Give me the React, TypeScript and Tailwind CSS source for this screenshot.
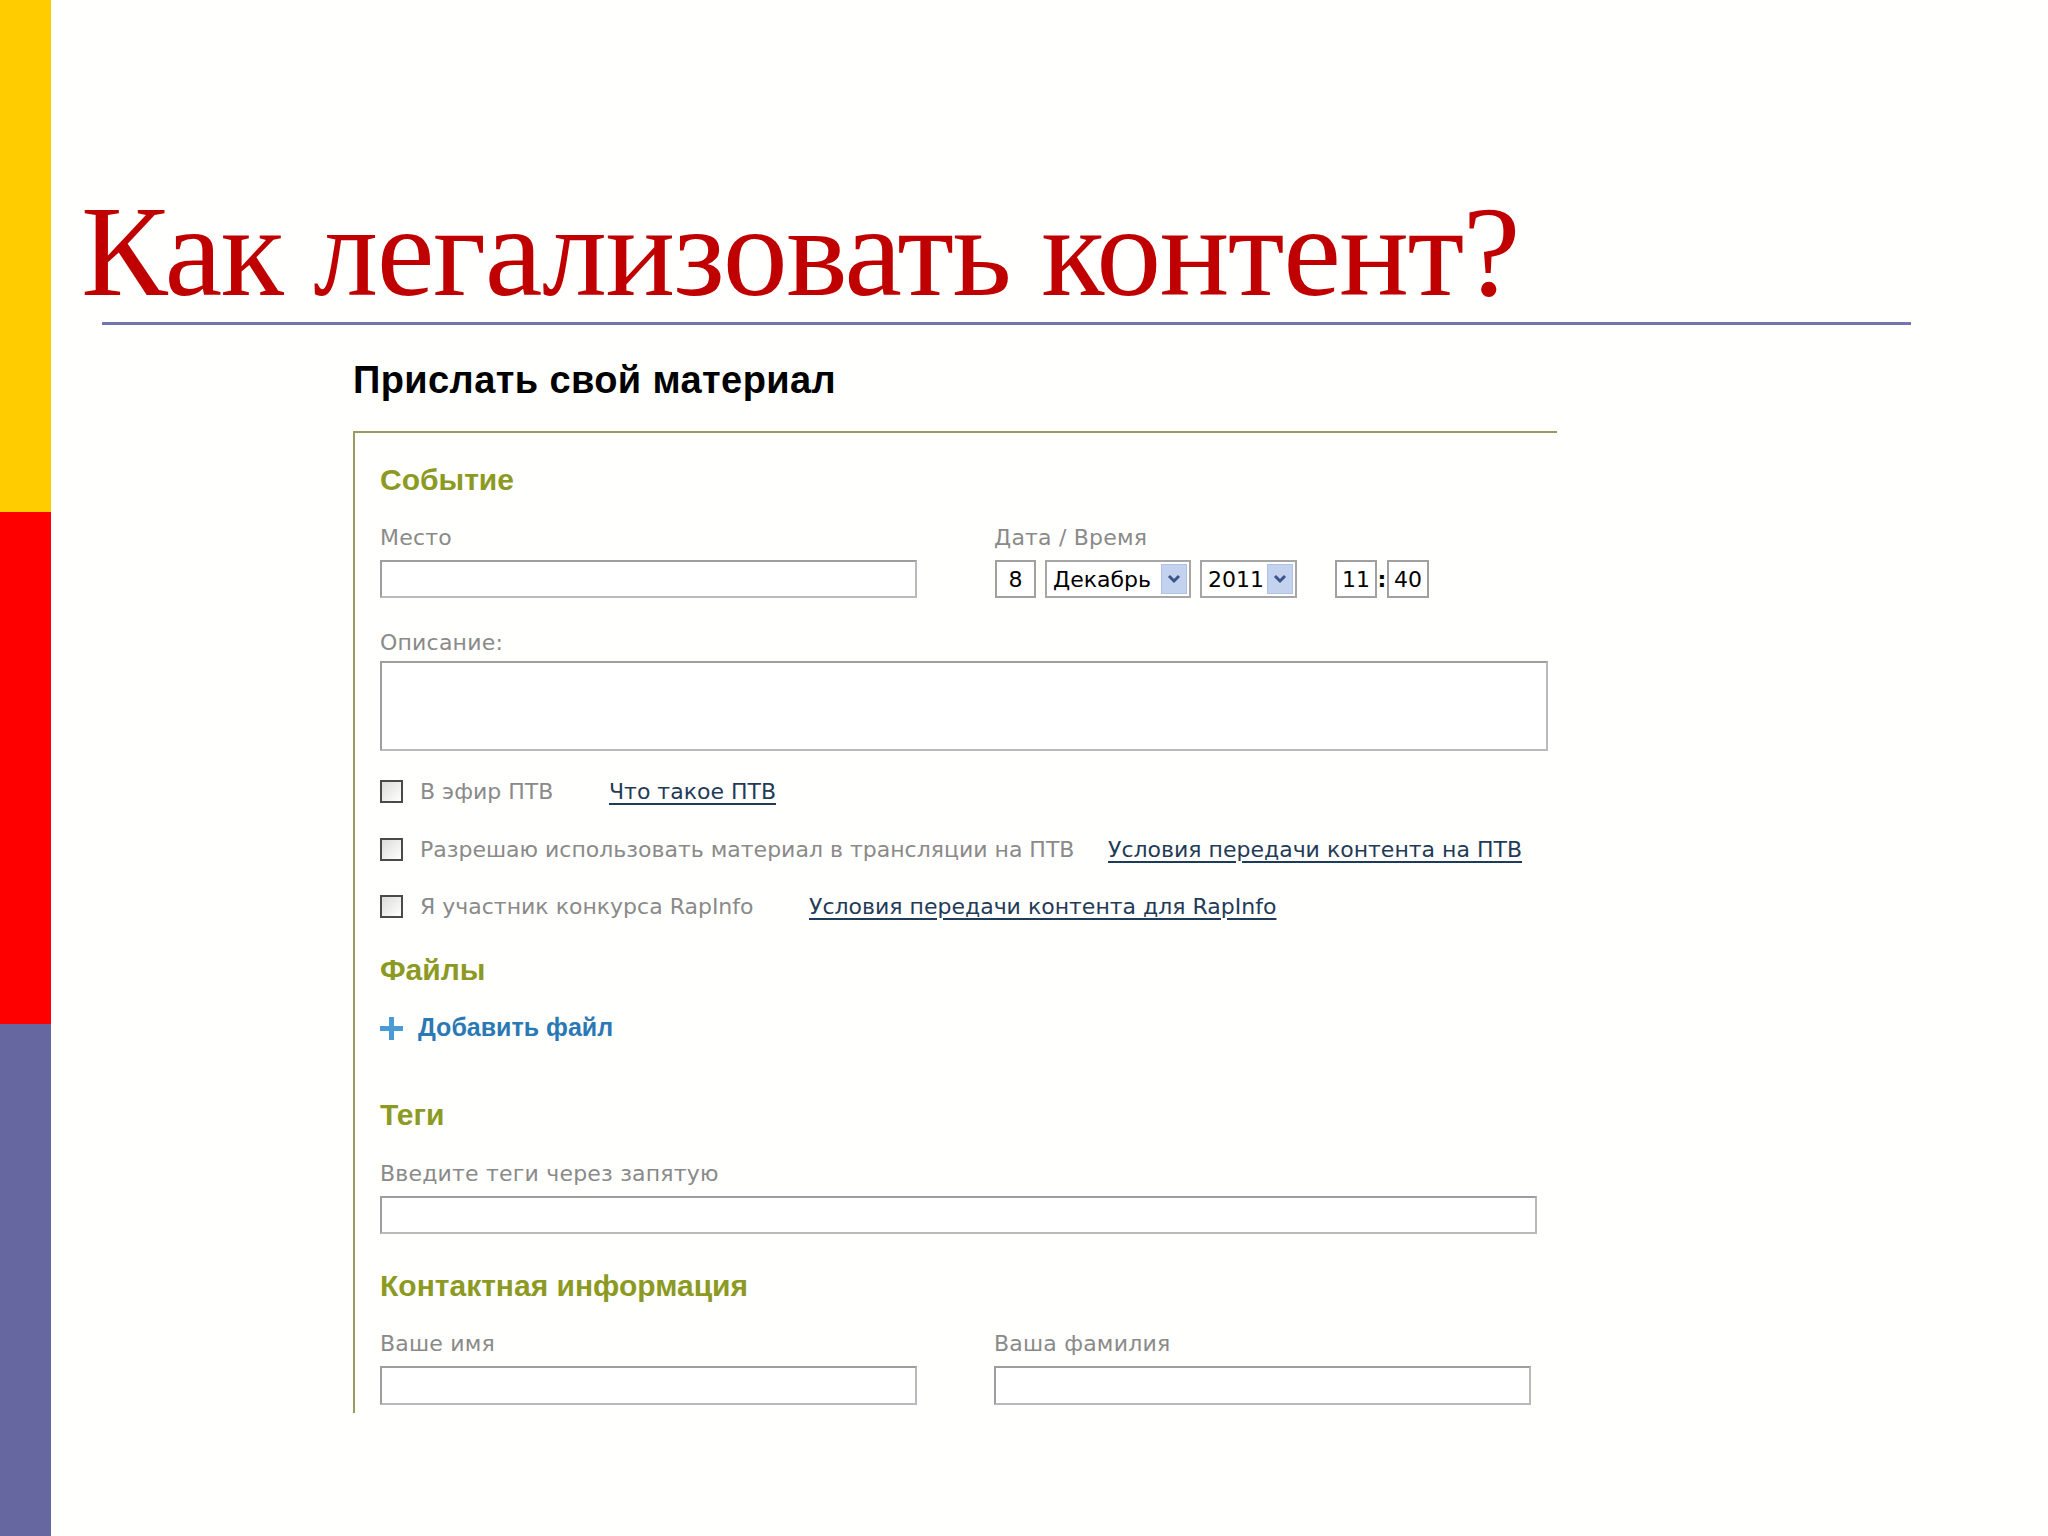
import React from "react";

const label = "text-[22px] leading-[30px] h-[30px] text-[#8a8a8a] tracking-[0.2px]";
const labelFont = { fontFamily: '"DejaVu Sans", Verdana, sans-serif' };

function Input({ w, h = 38 }: { w: string; h?: number }) {
  return (
    <div
      className={`${w} border-2 border-[#9c9ea0] border-b-[#b8babc] border-r-[#b8babc] bg-white`}
      style={{ height: h }}
    />
  );
}

function Heading({ children }: { children: React.ReactNode }) {
  return (
    <div
      className="h-[38px] flex items-center text-[30px] font-bold text-[#8c9a24]"
      style={{ fontFamily: '"Liberation Sans", Arial, sans-serif' }}
    >
      {children}
    </div>
  );
}

function Checkbox() {
  return (
    <div className="w-[23px] h-[23px] border-2 border-[#4a4a4a] bg-gradient-to-br from-[#dcdcd8] to-[#ffffff] shrink-0" />
  );
}

function Link({ children }: { children: React.ReactNode }) {
  return <span className="text-[#1f3b58] underline underline-offset-[4px] decoration-[2px]">{children}</span>;
}

function Chevron() {
  return (
    <div className="w-[26px] h-[30px] bg-[#c3d3ef] border border-[#b0c2e6] flex items-center justify-center">
      <svg width="14" height="10" viewBox="0 0 14 10">
        <path d="M2 2 L7 7 L12 2" stroke="#3c5488" strokeWidth="3" fill="none" />
      </svg>
    </div>
  );
}

export default function App() {
  return (
    <div className="w-[2048px] h-[1536px] bg-[#fffffd] flex overflow-hidden">
      <div className="w-[51px] flex flex-col shrink-0">
        <div className="h-[512px] bg-[#ffcc00]" />
        <div className="h-[512px] bg-[#ff0000]" />
        <div className="h-[512px] bg-[#6666a0]" />
      </div>
      <div className="flex-1 flex flex-col">
        <div
          className="mt-[186px] ml-[30px] text-[130px] leading-none text-[#c00000] tracking-[-1.5px] whitespace-nowrap"
          style={{ fontFamily: '"Liberation Serif", "Times New Roman", serif' }}
        >
          Как легализовать контент?
        </div>
        <div className="mt-[6px] ml-[51px] w-[1809px] h-[3px] bg-[#7474b0]" />
        <div
          className="mt-[36px] ml-[302px] h-[38px] flex items-center text-[38px] font-bold text-black tracking-[0.4px]"
          style={{ fontFamily: '"Liberation Sans", Arial, sans-serif' }}
        >
          Прислать свой материал
        </div>
        <div
          className="mt-[32px] ml-[302px] w-[1204px] border-t-2 border-l-2 border-[#9a9a62] pl-[25px] pb-[8px] flex flex-col"
          style={labelFont}
        >
          <div className="mt-[27px]">
            <Heading>Событие</Heading>
          </div>
          <div className="mt-[25px] flex">
            <div className={`${label} w-[614px]`}>Место</div>
            <div className={label}>Дата / Время</div>
          </div>
          <div className="mt-[7px] flex items-center">
            <Input w="w-[537px]" />
            <div className="ml-[78px] flex items-center text-[22px] text-black">
              <div className="w-[41px] h-[38px] border-2 border-[#a0a0a0] bg-white flex items-center justify-center">
                8
              </div>
              <div className="ml-[9px] w-[146px] h-[38px] border-2 border-[#a6a6a6] bg-white flex items-center justify-between pl-[6px] pr-[2px]">
                <span>Декабрь</span>
                <Chevron />
              </div>
              <div className="ml-[9px] w-[97px] h-[38px] border-2 border-[#a6a6a6] bg-white flex items-center justify-between pl-[6px] pr-[2px]">
                <span>2011</span>
                <Chevron />
              </div>
              <div className="ml-[38px] w-[42px] h-[38px] border-2 border-[#a0a0a0] bg-white flex items-center justify-center">
                11
              </div>
              <div className="w-[10px] text-center font-bold">:</div>
              <div className="w-[42px] h-[38px] border-2 border-[#a0a0a0] bg-white flex items-center justify-center">
                40
              </div>
            </div>
          </div>
          <div className={`mt-[30px] ${label}`}>Описание:</div>
          <div className="mt-[3px]">
            <Input w="w-[1168px]" h={90} />
          </div>
          <div className="mt-[25px] h-[30px] flex items-center text-[22px] text-[#8a8a8a] tracking-[0px]">
            <Checkbox />
            <span className="ml-[17px] w-[189px]">В эфир ПТВ</span>
            <Link>Что такое ПТВ</Link>
          </div>
          <div className="mt-[28px] h-[30px] flex items-center text-[22px] text-[#8a8a8a] tracking-[0px]">
            <Checkbox />
            <span className="ml-[17px] w-[688px] whitespace-nowrap">Разрешаю использовать материал в трансляции на ПТВ</span>
            <Link>Условия передачи контента на ПТВ</Link>
          </div>
          <div className="mt-[27px] h-[30px] flex items-center text-[22px] text-[#8a8a8a] tracking-[0px]">
            <Checkbox />
            <span className="ml-[17px] w-[389px] whitespace-nowrap">Я участник конкурса RapInfo</span>
            <Link>Условия передачи контента для RapInfo</Link>
          </div>
          <div className="mt-[29px]">
            <Heading>Файлы</Heading>
          </div>
          <div
            className="mt-[23px] h-[34px] flex items-center text-[25px] font-bold text-[#2a78b4]"
            style={{ fontFamily: '"Liberation Sans", Arial, sans-serif' }}
          >
            <svg width="23" height="23" viewBox="0 0 23 23">
              <rect x="9" y="0" width="5" height="23" fill="#4a9ad6" />
              <rect x="0" y="9" width="23" height="5" fill="#4a9ad6" />
            </svg>
            <span className="ml-[15px]">Добавить файл</span>
          </div>
          <div className="mt-[50px]">
            <Heading>Теги</Heading>
          </div>
          <div className={`mt-[26px] ${label}`}>Введите теги через запятую</div>
          <div className="mt-[7px]">
            <Input w="w-[1157px]" />
          </div>
          <div className="mt-[32px]">
            <Heading>Контактная информация</Heading>
          </div>
          <div className="mt-[25px] flex">
            <div className={`${label} w-[614px]`}>Ваше имя</div>
            <div className={label}>Ваша фамилия</div>
          </div>
          <div className="mt-[7px] flex">
            <Input w="w-[537px]" h={39} />
            <div className="ml-[77px]">
              <Input w="w-[537px]" h={39} />
            </div>
          </div>
        </div>
      </div>
    </div>
  );
}
